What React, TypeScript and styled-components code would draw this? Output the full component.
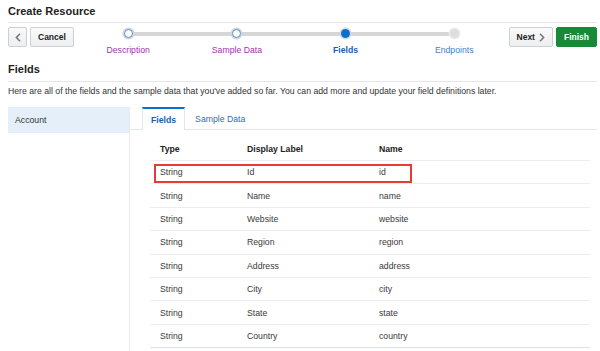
import React from 'react';
import styled, { createGlobalStyle } from 'styled-components';

const GlobalStyle = createGlobalStyle`
  html, body {
    margin: 0;
    padding: 0;
    background: #fff;
  }
  body {
    font-family: 'Liberation Sans', Arial, sans-serif;
    color: #333;
  }
`;

const Page = styled.div`
  width: 600px;
  height: 351px;
  overflow: hidden;
  padding: 0 3px 0 8px;
  box-sizing: border-box;
`;

const TitleBar = styled.div`
  height: 22px;
  border-bottom: 1px solid #e6e6e6;
  display: flex;
  align-items: center;
`;

const Title = styled.h1`
  margin: 0;
  font-size: 11px;
  font-weight: bold;
  color: #222;
  line-height: 1;
`;

const Toolbar = styled.div`
  display: flex;
  align-items: flex-start;
  margin-top: 4px;
  height: 31px;
`;

const ButtonGroup = styled.div`
  display: flex;
  gap: 3px;
`;

const Button = styled.button<{ $primary?: boolean }>`
  height: 20px;
  padding: 0 7px;
  display: flex;
  align-items: center;
  gap: 4px;
  font-family: inherit;
  font-size: 8.5px;
  font-weight: bold;
  border-radius: 2px;
  cursor: pointer;
  color: ${(p) => (p.$primary ? '#fff' : '#222')};
  background: ${(p) => (p.$primary ? '#168a36' : 'linear-gradient(#fafafa, #eceef0)')};
  border: 1px solid ${(p) => (p.$primary ? '#168a36' : '#c9d0d6')};
`;

const IconButton = styled(Button)`
  width: 19px;
  padding: 0;
  justify-content: center;
`;

const Train = styled.div`
  flex: 1;
  display: flex;
`;

const Stop = styled.div<{ $first?: boolean; $last?: boolean }>`
  flex: 1;
  position: relative;
  display: flex;
  flex-direction: column;
  align-items: center;
  padding-top: 2px;

  &::before,
  &::after {
    content: '';
    position: absolute;
    top: 5px;
    height: 4px;
    width: 50%;
    background: #d6d6d6;
  }
  &::before {
    left: 0;
    display: ${(p) => (p.$first ? 'none' : 'block')};
  }
  &::after {
    right: 0;
    display: ${(p) => (p.$last ? 'none' : 'block')};
  }
`;

type StopState = 'visited' | 'current' | 'todo';

const Dot = styled.span<{ $state: StopState }>`
  position: relative;
  z-index: 1;
  width: 7px;
  height: 7px;
  border-radius: 50%;
  box-sizing: content-box;
  border: 1.5px solid
    ${(p) => (p.$state === 'visited' ? '#4d94dc' : p.$state === 'current' ? '#0a6fd2' : '#dedede')};
  background: ${(p) => (p.$state === 'current' ? '#0a6fd2' : p.$state === 'todo' ? '#dedede' : '#fff')};
  box-shadow: 0 0 0 1.5px ${(p) => (p.$state === 'todo' ? '#ececec' : '#d6d6d6')};
`;

const StopLabel = styled.span<{ $state: StopState }>`
  margin-top: 7px;
  font-size: 8.7px;
  white-space: nowrap;
  font-weight: ${(p) => (p.$state === 'current' ? 'bold' : 'normal')};
  color: ${(p) => (p.$state === 'visited' ? '#9c35a8' : p.$state === 'current' ? '#1560b4' : '#3f7fc4')};
`;

const SectionHeading = styled.h2`
  margin: 0;
  height: 24px;
  display: flex;
  align-items: center;
  padding-bottom: 2px;
  box-sizing: border-box;
  font-size: 11px;
  font-weight: bold;
  color: #222;
  border-bottom: 1px solid #e6e6e6;
`;

const Intro = styled.p`
  margin: 0;
  height: 25px;
  padding-top: 4px;
  box-sizing: border-box;
  font-size: 8.7px;
  line-height: 10px;
  color: #333;
`;

const Body = styled.div`
  display: flex;
  height: 250px;
`;

const Sidebar = styled.div`
  width: 121px;
  border-right: 1px solid #e8ebee;
`;

const SidebarItem = styled.div<{ $selected?: boolean }>`
  height: 26px;
  display: flex;
  align-items: center;
  padding-left: 7px;
  font-size: 8.7px;
  color: #333;
  background: ${(p) => (p.$selected ? '#e4eff9' : 'transparent')};
`;

const Content = styled.div`
  flex: 1;
`;

const TabBar = styled.div`
  display: flex;
  padding-left: 12px;
  height: 22px;
  border-bottom: 1px solid #e3e6e9;
`;

const Tab = styled.div<{ $active?: boolean }>`
  display: flex;
  align-items: center;
  padding: 0 ${(p) => (p.$active ? '8px' : '9px')};
  font-size: 8.7px;
  box-sizing: border-box;
  height: ${(p) => (p.$active ? '23px' : '22px')};
  font-weight: ${(p) => (p.$active ? 'bold' : 'normal')};
  color: ${(p) => (p.$active ? '#1560b4' : '#2b6fbb')};
  background: #fff;
  border-top: 2px solid ${(p) => (p.$active ? '#0a6fd2' : 'transparent')};
  border-left: 1px solid ${(p) => (p.$active ? '#e3e6e9' : 'transparent')};
  border-right: 1px solid ${(p) => (p.$active ? '#e3e6e9' : 'transparent')};
`;

const Table = styled.div`
  margin: 8px 0 0 20px;
  width: 440px;
`;

const Row = styled.div<{ $header?: boolean }>`
  position: relative;
  display: grid;
  grid-template-columns: 87px 132px 1fr;
  align-items: center;
  height: ${(p) => (p.$header ? '23px' : '23.4px')};
  box-sizing: border-box;
  border-bottom: 1px solid #ebedef;
  font-size: 8.7px;
  font-weight: ${(p) => (p.$header ? 'bold' : 'normal')};
  color: ${(p) => (p.$header ? '#222' : '#3a3a3a')};

  &:last-child {
    border-bottom-color: #dde2e8;
  }
`;

const Cell = styled.div`
  padding-left: 10px;
`;

const Highlight = styled.div`
  position: absolute;
  left: 4px;
  top: 3px;
  width: 258px;
  height: 19px;
  box-sizing: border-box;
  border: 2px solid #e63c35;
  pointer-events: none;
`;

const Chevron = ({ dir }: { dir: 'left' | 'right' }) => (
  <svg width="6" height="9" viewBox="0 0 6 9" fill="none" stroke="#7a7a7a" strokeWidth="1.6">
    {dir === 'left' ? <path d="M5 0.8 L1.4 4.5 L5 8.2" /> : <path d="M1 0.8 L4.6 4.5 L1 8.2" />}
  </svg>
);

const stops: { label: string; state: StopState }[] = [
  { label: 'Description', state: 'visited' },
  { label: 'Sample Data', state: 'visited' },
  { label: 'Fields', state: 'current' },
  { label: 'Endpoints', state: 'todo' },
];

const fields = [
  ['String', 'Id', 'id'],
  ['String', 'Name', 'name'],
  ['String', 'Website', 'website'],
  ['String', 'Region', 'region'],
  ['String', 'Address', 'address'],
  ['String', 'City', 'city'],
  ['String', 'State', 'state'],
  ['String', 'Country', 'country'],
];

export default function App() {
  return (
    <>
      <GlobalStyle />
      <Page>
        <TitleBar>
          <Title>Create Resource</Title>
        </TitleBar>

        <Toolbar>
          <ButtonGroup>
            <IconButton aria-label="Back">
              <Chevron dir="left" />
            </IconButton>
            <Button>Cancel</Button>
          </ButtonGroup>

          <Train>
            {stops.map((s, i) => (
              <Stop key={s.label} $first={i === 0} $last={i === stops.length - 1}>
                <Dot $state={s.state} />
                <StopLabel $state={s.state}>{s.label}</StopLabel>
              </Stop>
            ))}
          </Train>

          <ButtonGroup>
            <Button>
              Next
              <Chevron dir="right" />
            </Button>
            <Button $primary>Finish</Button>
          </ButtonGroup>
        </Toolbar>

        <SectionHeading>Fields</SectionHeading>
        <Intro>
          Here are all of the fields and the sample data that you've added so far. You can add more and
          update your field definitions later.
        </Intro>

        <Body>
          <Sidebar>
            <SidebarItem $selected>Account</SidebarItem>
          </Sidebar>
          <Content>
            <TabBar>
              <Tab $active>Fields</Tab>
              <Tab>Sample Data</Tab>
            </TabBar>
            <Table>
              <Row $header>
                <Cell>Type</Cell>
                <Cell>Display Label</Cell>
                <Cell>Name</Cell>
              </Row>
              {fields.map(([type, label, name], i) => (
                <Row key={name}>
                  <Cell>{type}</Cell>
                  <Cell>{label}</Cell>
                  <Cell>{name}</Cell>
                  {i === 0 && <Highlight />}
                </Row>
              ))}
            </Table>
          </Content>
        </Body>
      </Page>
    </>
  );
}
